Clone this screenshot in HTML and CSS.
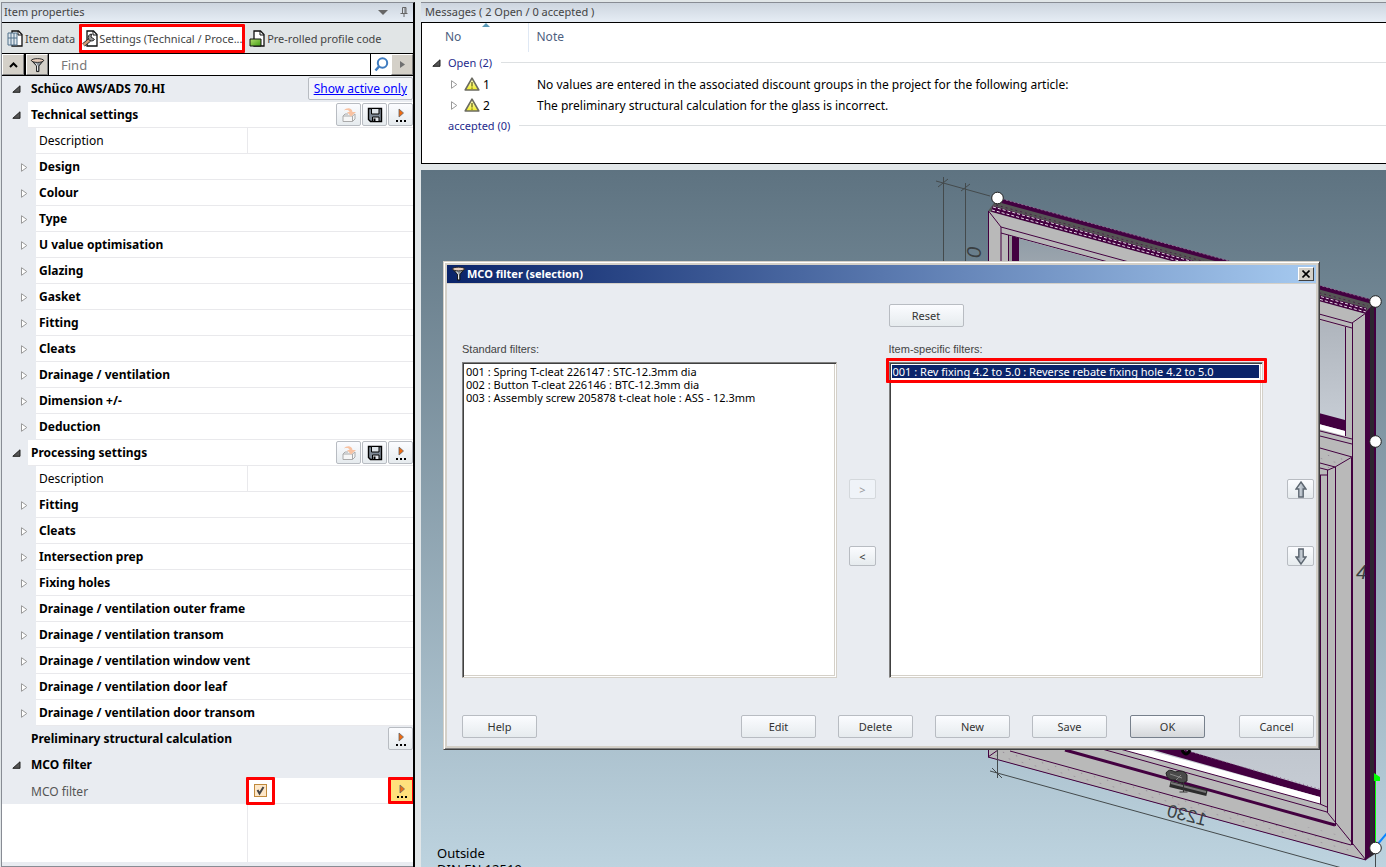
FILE: index.html
```
<!DOCTYPE html>
<html lang="en">
<head>
<meta charset="utf-8">
<title>Item properties</title>
<link rel="stylesheet" href="styles.css">
</head>
<body>
<svg class="defs" aria-hidden="true">
  <defs>
    <linearGradient id="steel" x1="0" x2="1" y1="0" y2="0"><stop offset="0" stop-color="#eef2f6"/><stop offset="1" stop-color="#8d99a6"/></linearGradient>
    <linearGradient id="warn" x1="0" x2="0" y1="0" y2="1"><stop offset="0" stop-color="#ffffe0"/><stop offset="1" stop-color="#f2ee20"/></linearGradient>
    <linearGradient id="leafgreen" x1="0" x2="1" y1="0" y2="1"><stop offset="0" stop-color="#b4e070"/><stop offset="1" stop-color="#3f9c10"/></linearGradient>
    <symbol id="i-expanded" viewBox="0 0 9 8"><path d="M8 .8V7.300H.8z" fill="#555" stroke="#222"/></symbol>
    <symbol id="i-collapsed" viewBox="0 0 7 9"><path d="M.5.7v7.600L5.800 4.500z" fill="#fff" stroke="#999"/></symbol>
    <symbol id="i-play" viewBox="0 0 14 16"><path d="M5 2v8l4.500-4z" fill="#f06a10" stroke="#666" stroke-width=".8"/><path d="M2 13h2v2H2zM6 13h2v2H6zM10 13h2v2h-2z" fill="#000"/></symbol>
    <symbol id="i-save" viewBox="0 0 16 16"><path d="M1.500 1.500h13v13h-11l-2-2z" fill="#7f8a96" stroke="#000" stroke-width="1.400"/><path d="M4.500 1.500h7.500V7H4.500z" fill="#dfe5ea" stroke="#000"/><path d="M5.500 10h6.500v4.500H5.500z" fill="#dfe3e8" stroke="#000"/><path d="M6.500 11.500h2v3h-2z" fill="#000"/></symbol>
    <symbol id="i-open" viewBox="0 0 16 16"><path d="M2 9h9.500l2.500-2V12l-2.500 2.500H2z" fill="#f6f6f6" stroke="#aaa"/><path d="M2 9l2-2h3M11.500 9v5.500" fill="none" stroke="#aaa"/><path d="M3 3.500C5 .5 11 0 11.500 5H15l-5 4.500L6 5h2.500C8.200 3 5.500 2.500 3 3.500z" fill="#f8c2a2"/></symbol>
    <symbol id="i-warn" viewBox="0 0 16 15"><path d="M8 1.200L14.800 13H1.200z" fill="url(#warn)" stroke="#6b6b60" stroke-width="1.600" stroke-linejoin="round"/><path d="M8 5v4.500M8 10.500v1.300" stroke="#6a6a20" stroke-width="1.300"/></symbol>
    <symbol id="i-funnel" viewBox="0 0 16 16"><path d="M1.500 3h13L9.500 9v6H7V9z" fill="#8a929a" stroke="#111"/><ellipse cx="8" cy="3.200" rx="6.500" ry="2" fill="#e8cdbb" stroke="#222"/><path d="M6 6l2 3v5" stroke="#eee" fill="none"/></symbol>
    <symbol id="i-arrow" viewBox="0 0 12 17"><path d="M6 1l5 7H8.200v8H3.800V8H1z" fill="url(#steel)" stroke="#5c6670" stroke-width="1.400"/></symbol>
    <symbol id="i-page" viewBox="0 0 16 17"><path d="M5 1h6.500L15 4.500V16H5z" fill="#fff" stroke="#111" stroke-width="1.300"/><path d="M11 1v4h4" fill="none" stroke="#111"/></symbol>
  </defs>
</svg>
<div class="app">
  <aside class="side">
    <header class="caption"><span class="grow">Item properties</span>
      <svg width="10" height="6" viewBox="0 0 10 6"><path d="M0 1h10L5 6z" fill="#666"/></svg>
      <svg width="8" height="10" viewBox="0 0 8 10"><path d="M2.500 6V.5h3.500V6M5 1v5M.5 6.500h7M4 7v3" fill="none" stroke="#666"/></svg>
    </header>
    <nav class="tabs">
      <a class="tab" href="#data"><svg width="16" height="17"><use href="#i-page"/><path d="M1 3h9v12H1zM4 3v12M7 3v12M1 8h9" fill="#dfe8ee" stroke="#51718a"/></svg>Item data</a>
      <a class="tab current" href="#settings"><svg width="16" height="17"><use href="#i-page"/><path d="M1.500 15l6-5" stroke="#222" stroke-width="4"/><path d="M1.500 15l6-5" stroke="#d09a78" stroke-width="2.500"/><path d="M12.500 9.500a3.500 3.500 0 1 1-3-5.500L9 7l1.500 1z" fill="#999" stroke="#222"/></svg><span class="clip">Settings (Technical / Proce...</span></a>
      <a class="tab" href="#code"><svg width="16" height="17"><use href="#i-page"/><path d="M1 9h11v7H1z" fill="url(#leafgreen)" stroke="#111"/></svg>Pre-rolled profile code</a>
    </nav>
    <form class="find">
      <button type="button" class="raised" aria-label="Collapse"><svg width="9" height="6" viewBox="0 0 9 6"><path d="M1 5l3.500-3.500L8 5" fill="none" stroke="#000" stroke-width="2"/></svg></button>
      <button type="button" class="raised" aria-label="Filter"><svg width="15" height="16"><use href="#i-funnel"/></svg></button>
      <input class="field" type="text" placeholder="Find" aria-label="Find">
      <span class="lens"><svg width="15" height="15" viewBox="0 0 15 15"><circle cx="8.500" cy="6" r="4.700" fill="#fff" stroke="#3f7cc0" stroke-width="2"/><path d="M5 9.500L1.500 13.500" stroke="#3f7cc0" stroke-width="2.500"/></svg></span>
      <button type="button" class="raised" aria-label="Next"><svg width="5" height="7" viewBox="0 0 5 7"><path d="M0 0v7l5-3.500z" fill="#707070"/></svg></button>
    </form>
    <div class="tree">
      <div class="row top"><span class="twist"><svg width="9" height="8"><use href="#i-expanded"/></svg></span><b class="grow">Schüco AWS/ADS 70.HI</b><a class="active-only" href="#active">Show active only</a></div>
      <div class="row group"><span class="twist"><svg width="9" height="8"><use href="#i-expanded"/></svg></span><span class="cell"><b class="grow">Technical settings</b>
        <button class="tool" aria-label="Load"><svg width="16" height="16"><use href="#i-open"/></svg></button><button class="tool" aria-label="Save"><svg width="16" height="16"><use href="#i-save"/></svg></button><button class="tool" aria-label="More"><svg width="14" height="16"><use href="#i-play"/></svg></button></span></div>
      <div class="row leaf"><span class="twist"></span><span class="cell"><span class="name">Description</span><span class="value"></span></span></div>
      <div class="row leaf"><span class="twist"><svg width="7" height="9"><use href="#i-collapsed"/></svg></span><b class="cell">Design</b></div>
      <div class="row leaf"><span class="twist"><svg width="7" height="9"><use href="#i-collapsed"/></svg></span><b class="cell">Colour</b></div>
      <div class="row leaf"><span class="twist"><svg width="7" height="9"><use href="#i-collapsed"/></svg></span><b class="cell">Type</b></div>
      <div class="row leaf"><span class="twist"><svg width="7" height="9"><use href="#i-collapsed"/></svg></span><b class="cell">U value optimisation</b></div>
      <div class="row leaf"><span class="twist"><svg width="7" height="9"><use href="#i-collapsed"/></svg></span><b class="cell">Glazing</b></div>
      <div class="row leaf"><span class="twist"><svg width="7" height="9"><use href="#i-collapsed"/></svg></span><b class="cell">Gasket</b></div>
      <div class="row leaf"><span class="twist"><svg width="7" height="9"><use href="#i-collapsed"/></svg></span><b class="cell">Fitting</b></div>
      <div class="row leaf"><span class="twist"><svg width="7" height="9"><use href="#i-collapsed"/></svg></span><b class="cell">Cleats</b></div>
      <div class="row leaf"><span class="twist"><svg width="7" height="9"><use href="#i-collapsed"/></svg></span><b class="cell">Drainage / ventilation</b></div>
      <div class="row leaf"><span class="twist"><svg width="7" height="9"><use href="#i-collapsed"/></svg></span><b class="cell">Dimension +/-</b></div>
      <div class="row leaf"><span class="twist"><svg width="7" height="9"><use href="#i-collapsed"/></svg></span><b class="cell">Deduction</b></div>
      <div class="row group"><span class="twist"><svg width="9" height="8"><use href="#i-expanded"/></svg></span><span class="cell"><b class="grow">Processing settings</b>
        <button class="tool" aria-label="Load"><svg width="16" height="16"><use href="#i-open"/></svg></button><button class="tool" aria-label="Save"><svg width="16" height="16"><use href="#i-save"/></svg></button><button class="tool" aria-label="More"><svg width="14" height="16"><use href="#i-play"/></svg></button></span></div>
      <div class="row leaf"><span class="twist"></span><span class="cell"><span class="name">Description</span><span class="value"></span></span></div>
      <div class="row leaf"><span class="twist"><svg width="7" height="9"><use href="#i-collapsed"/></svg></span><b class="cell">Fitting</b></div>
      <div class="row leaf"><span class="twist"><svg width="7" height="9"><use href="#i-collapsed"/></svg></span><b class="cell">Cleats</b></div>
      <div class="row leaf"><span class="twist"><svg width="7" height="9"><use href="#i-collapsed"/></svg></span><b class="cell">Intersection prep</b></div>
      <div class="row leaf"><span class="twist"><svg width="7" height="9"><use href="#i-collapsed"/></svg></span><b class="cell">Fixing holes</b></div>
      <div class="row leaf"><span class="twist"><svg width="7" height="9"><use href="#i-collapsed"/></svg></span><b class="cell">Drainage / ventilation outer frame</b></div>
      <div class="row leaf"><span class="twist"><svg width="7" height="9"><use href="#i-collapsed"/></svg></span><b class="cell">Drainage / ventilation transom</b></div>
      <div class="row leaf"><span class="twist"><svg width="7" height="9"><use href="#i-collapsed"/></svg></span><b class="cell">Drainage / ventilation window vent</b></div>
      <div class="row leaf"><span class="twist"><svg width="7" height="9"><use href="#i-collapsed"/></svg></span><b class="cell">Drainage / ventilation door leaf</b></div>
      <div class="row leaf"><span class="twist"><svg width="7" height="9"><use href="#i-collapsed"/></svg></span><b class="cell">Drainage / ventilation door transom</b></div>
      <div class="row top"><span class="twist"></span><b class="grow">Preliminary structural calculation</b><button class="tool" aria-label="More"><svg width="14" height="16"><use href="#i-play"/></svg></button></div>
      <div class="row top"><span class="twist"><svg width="9" height="8"><use href="#i-expanded"/></svg></span><b class="grow">MCO filter</b></div>
      <div class="row mco"><label class="mco-name" for="mco">MCO filter</label><span class="mco-value"><span class="mark"><input class="check" type="checkbox" id="mco" checked></span><button class="tool hot" aria-label="Edit MCO filter"><svg width="14" height="16"><use href="#i-play"/></svg></button></span></div>
      <div class="blank"></div>
    </div>
    <div class="foot"></div>
  </aside>
  <main class="main">
    <section class="messages">
      <header class="caption">Messages ( 2 Open / 0 accepted )</header>
      <div class="msg-box">
        <table class="msg-table">
          <thead><tr><th class="no">No<svg class="sort" width="8" height="4" viewBox="0 0 8 4"><path d="M0 4h8L4 0z" fill="#5a9ab8"/></svg></th><th>Note</th></tr></thead>
          <tbody>
            <tr><td colspan="2"><span class="msg-group"><svg width="9" height="8"><use href="#i-expanded"/></svg>Open (2)</span></td></tr>
            <tr><td><span class="msg-no"><svg width="7" height="9"><use href="#i-collapsed"/></svg><svg width="16" height="15"><use href="#i-warn"/></svg>1</span></td><td class="note">No values are entered in the associated discount groups in the project for the following article:</td></tr>
            <tr><td><span class="msg-no"><svg width="7" height="9"><use href="#i-collapsed"/></svg><svg width="16" height="15"><use href="#i-warn"/></svg>2</span></td><td class="note">The preliminary structural calculation for the glass is incorrect.</td></tr>
            <tr><td colspan="2"><span class="msg-group closed">accepted (0)</span></td></tr>
          </tbody>
        </table>
      </div>
    </section>
    <section class="view">
      <svg class="scene" viewBox="421 170 965 697" preserveAspectRatio="xMinYMin slice">
        <defs>
          <linearGradient id="glass" x1="0" x2="0" y1="0" y2="1"><stop offset="0" stop-color="#8f9ca6"/><stop offset=".3" stop-color="#a8aeb6"/><stop offset="1" stop-color="#c6ccd4"/></linearGradient>
          <pattern id="dots" width="13" height="12" patternUnits="userSpaceOnUse" patternTransform="skewY(15)"><path d="M2 3h1v1H2zM8 8h1v1H8z" fill="#8a7d8c"/></pattern>
        </defs>
        <g fill="none" stroke="#444a4c">
          <path d="M936 181L990 196M943.500 177V300M965.500 183V300M938 187l10-8M961 191l9-7"/>
        </g>
        <text class="dim" transform="translate(981 258) rotate(-90)" x="0" y="0">0</text>
        <!-- frame depth -->
        <path d="M997 199L1375 301V854L1366 860L988 757V211z" fill="#555"/>
        <path d="M1002 201L1373 302" stroke="#430040" stroke-width="4"/>
        <path d="M1002 199L1373 300" stroke="#8f6d93" stroke-dasharray="2 2"/>
        <path d="M996 205L1368 306" stroke="#430040" stroke-width=".6" stroke-dasharray="2 3"/>
        <path d="M992 209L1366 311" stroke="#430040" stroke-width="6"/>
        <path d="M993 207L1366 309M992 210L1366 312" stroke="#e8dce8" stroke-width="1" stroke-dasharray="3 2"/>
        <path d="M1365.500 312L1376 302V852L1365.500 860z" fill="#430040"/>
        <path d="M1370 308L1374 304V854L1370 857z" fill="#2d2630"/>
        <!-- front face -->
        <path d="M988 211L1366 314V860L988 757z" fill="#b9b9b9"/>
        <path d="M990 747L1352 838V845L1366 860L988 757z" fill="url(#dots)"/>
        <path d="M1320 450L1350 457L1330 469L1320 466z" fill="url(#dots)"/>
        <g fill="none" stroke="#430040">
          <path d="M988.500 757V211L1001 227V745M1008.500 235V745M1001 227L1352 323M1001 233L1352 328M1352 323L1366 313M1365.500 314V860" />
          <path d="M1352.500 323V845M1345.500 327V436M1320 431L1352 439M1320 436L1352 444M1320 448L1352 457L1335 467L1320 463M1335 467L1328 470L1320 468"/>
        </g>
        <path d="M1010 236L1345 328V421L1010 336z" fill="url(#glass)"/>
        <path d="M1009 236l3 1v64h-3z" fill="#999"/><path d="M1012 236l7 2v64h-7z" fill="#430040"/>
        <path d="M1300 408L1345 420V431L1300 419z" fill="#430040"/>
        <path d="M1300 419L1345 431V436L1300 424z" fill="#fff"/>
        <path d="M1020 420L1320 500V797L1020 715z" fill="url(#glass)"/>
        <path d="M1150 749H1182L1320 790V797z" fill="#430040"/>
        <path d="M1120 749H1145L1320 797V804z" fill="#fff"/>
        <g fill="none" stroke="#430040">
          <path d="M1320.500 475V804M1327.500 470V812M1335.500 467V826M1351.500 458V845M1320 475h7"/>
          <path d="M1120 749L1320 804L1327 807M1102 749L1327 812M1010 751L1351 845M1327 812L1366 860M988 757L1366 860M988 757L998 750"/>
          <path d="M1065 750L1335 825" stroke-width="3"/>
          <path d="M1180 749L1320 789" stroke="#8f6d93" stroke-dasharray="1 3"/>
        </g>
        <path d="M1182 750q4 8 8 0" fill="none" stroke="#000" stroke-width="3"/>
        <path d="M1170 784L1207 793" stroke="#2c2c2c" stroke-width="6"/>
        <path d="M1171 783L1206 792" stroke="#777" stroke-width="2"/>
        <path d="M1166 773q3-5 9-1q9-3 12 3v6q-6 4-11-1q-9 1-10-7z" fill="#4a4a4a" stroke="#222"/>
        <path d="M1170 774l12 4M1176 780l5-5" stroke="#888"/><path d="M1183.500 782v10m-4 0h8" stroke="#333"/>
        <g fill="none" stroke="#444a4c">
          <path d="M990 771L1342 868M997.500 750V778M992 768l10 10M1375.500 854V868"/>
        </g>
        <text class="dim flat" transform="translate(1205 826) rotate(14) scale(-1 1)" x="0" y="0">1230</text>
        <text class="dim" x="1356" y="579">4</text>
        <path d="M1365.500 314V860" stroke="#430040"/>
        <path d="M1375.500 780V843" stroke="#0f0" stroke-width="1"/><path d="M1374 773l6 4v4h-6z" fill="#0f0"/>
        <path d="M1377 845L1387 833" stroke="#0a84ff" stroke-width="2"/>
        <g fill="#fff" stroke="#222"><circle cx="997.500" cy="198" r="5.800"/><circle cx="1375.500" cy="301.500" r="5.800"/><circle cx="1375.500" cy="441.500" r="5.800"/><circle cx="1375.500" cy="848" r="5.800"/></g>
      </svg>
      <div class="info"><div>Outside</div><div>DIN EN 12519</div></div>
      <div class="dialog" role="dialog" aria-labelledby="dlg-title">
        <div class="dlg-bar"><svg width="15" height="15"><use href="#i-funnel" /></svg><span class="grow" id="dlg-title">MCO filter (selection)</span>
          <button class="close" aria-label="Close"><svg width="8" height="8" viewBox="0 0 8 8"><path d="M.5.5l7 7M7.500.5l-7 7" stroke="#000" stroke-width="1.600"/></svg></button></div>
        <div class="dlg-body">
          <div class="lists">
            <button class="btn reset">Reset</button>
            <label class="lbl std" for="std">Standard filters:</label>
            <label class="lbl own" for="own">Item-specific filters:</label>
            <select class="box std-box" id="std" size="20">
              <option>001 : Spring T-cleat 226147 : STC-12.3mm dia</option>
              <option>002 : Button T-cleat 226146 : BTC-12.3mm dia</option>
              <option>003 : Assembly screw 205878 t-cleat hole : ASS - 12.3mm</option>
            </select>
            <div class="move mid"><button class="mini" disabled>&gt;</button><button class="mini">&lt;</button></div>
            <div class="own-box"><select class="box" id="own" size="20">
              <option selected>001 : Rev fixing 4.2 to 5.0 : Reverse rebate fixing hole 4.2 to 5.0</option>
            </select><span class="ring"></span></div>
            <div class="move end"><button class="mini" aria-label="Up"><svg width="12" height="17"><use href="#i-arrow"/></svg></button><button class="mini" aria-label="Down"><svg class="flip" width="12" height="17"><use href="#i-arrow"/></svg></button></div>
          </div>
          <div class="actions"><button class="btn help">Help</button><button class="btn">Edit</button><button class="btn">Delete</button><button class="btn">New</button><button class="btn">Save</button><button class="btn default">OK</button><button class="btn cancel">Cancel</button></div>
        </div>
      </div>
    </section>
  </main>
</div>
</body>
</html>
```
FILE: styles.css
```
* { box-sizing: border-box; }
body { margin: 0; background: #e1e6e8; font-family: "Noto Sans", "Open Sans", sans-serif; font-size: 12px; color: #000; }
button, input, select { font-family: inherit; font-size: inherit; }
svg { display: block; flex: none; }
.defs { position: absolute; width: 0; height: 0; }
.grow { flex: 1; min-width: 0; }
.app { display: grid; grid-template-columns: minmax(300px, 421fr) minmax(0, 965fr); height: 100vh; overflow: hidden; padding-top: 2px; }

.side { display: flex; flex-direction: column; margin: 0 6px 0 1px; border-left: 1px solid #888c94; border-top: 1px solid #888c94; border-right: 2px solid #000; min-height: 0; }
.caption { display: flex; align-items: center; gap: 12px; height: 19px; padding: 0 5px 2px 2px; font-size: 11px; color: #444; background: linear-gradient(#cdd5df, #e6edf5); white-space: nowrap; flex: none; }
.main .caption { padding-left: 4px; }
.tabs { display: flex; align-items: center; gap: 4px; height: 32px; padding: 1px 5px 0; border-top: 1px solid #000; border-bottom: 1px solid #000; background: #e1e5e6; flex: none; }
.tab { display: flex; align-items: center; gap: 2px; font-size: 11px; color: #444; text-decoration: none; white-space: nowrap; }
.tab.current { width: 166px; height: 29px; gap: 1px; border: 3px solid #f00; border-radius: 1px; background: #fff; flex: none; }
.clip { flex: 1; }
.find { display: flex; height: 22px; border-bottom: 1px solid #000; background: #000; gap: 2px; flex: none; margin: 0; }
.raised { display: flex; align-items: center; justify-content: center; width: 22px; padding: 0; background: #d4d0c8; border: 1px solid; border-color: #fff #808080 #808080 #fff; flex: none; }
.field { flex: 1; min-width: 0; border: 0; padding: 0 12px; font-size: 13px; background: #fff; margin-left: -1px; }
.field::placeholder { color: #777; opacity: 1; }
.lens { display: flex; align-items: center; justify-content: center; width: 20px; background: #fff; margin: 0 -2px 0 -1px; }

.tree { display: flex; flex-direction: column; flex: 1; min-height: 0; background: #fff; overflow: hidden; }
.row { display: flex; height: 26px; flex: none; align-items: center; background: #e9ecf1; white-space: nowrap; }
.row.top { padding-bottom: 1px; }
.twist { width: 29px; padding-left: 10px; flex: none; }
.leaf .twist { width: 34px; padding-left: 19px; }
.cell { flex: 1; align-self: stretch; display: flex; align-items: center; gap: 1px; background: #fff; border-bottom: 1px solid #e9e9ec; }
.leaf .cell { padding-left: 3px; }
.group .twist { width: 26px; }
.group .cell { padding-left: 3px; }
.name { width: 209px; align-self: stretch; display: flex; align-items: center; border-right: 1px solid #e9e9ec; }
.tool { display: flex; align-items: center; justify-content: center; width: 25px; height: 23px; padding: 0; border: 1px solid #b8bcc2; border-radius: 2px; background: linear-gradient(#fbfcff, #e6ebee); flex: none; }
.active-only { display: flex; align-items: center; height: 23px; padding: 0 5px; border: 1px solid #b8bcc2; border-radius: 2px; background: #f3f5f9; color: #00f; text-decoration: underline; }
.mco-name { width: 245px; padding-left: 29px; color: #555; flex: none; }
.mco-value { flex: 1; align-self: stretch; display: flex; align-items: center; justify-content: space-between; background: #fff; border-bottom: 1px solid #e9e9ec; }
.mark { display: flex; align-items: center; justify-content: center; width: 29px; height: 28px; margin-left: -1px; border: 3px solid #f00; border-radius: 1px; background: #fff; }
.check { appearance: none; width: 13px; height: 13px; margin: 0; border: 1px solid #c08a3c; background: #fde7c8 url("data:image/svg+xml,%3Csvg xmlns='http://www.w3.org/2000/svg' viewBox='0 0 11 11'%3E%3Cpath d='M2.500 5l2 3.500L8.500 2' fill='none' stroke='%23444' stroke-width='2'/%3E%3C/svg%3E") center / 11px 11px; }
.tool.hot { width: 27px; height: 27px; margin-right: -2px; border: 3px solid #f00; border-radius: 1px; background: #ffe07c; }
.row.mco { position: relative; z-index: 1; }
.blank { flex: 1; margin-left: 245px; border-left: 1px solid #e9e9ec; }
.foot { height: 5px; flex: none; background: #e9ecf1; border-bottom: 1px solid #888c94; }

.main { display: flex; flex-direction: column; min-width: 0; min-height: 0; border-top: 1px solid #888c94; }
.msg-box { height: 142px; border: 1px solid #000; border-right: 0; background: #fff; }
.msg-table { width: 100%; table-layout: fixed; border-collapse: collapse; white-space: nowrap; }
.msg-table th { height: 29px; padding: 0 0 2px 8px; text-align: left; font-weight: 400; color: #4d6080; }
.msg-table th.no { position: relative; width: 106px; padding-left: 23px; border-right: 1px solid #dfe8f4; }
.sort { position: absolute; left: 60px; top: 0; }
.msg-table td { height: 21px; padding: 0; }
.msg-table td.note { padding: 2px 0 0 9px; }
.msg-group { display: flex; align-items: center; gap: 7px; padding-left: 10px; font-size: 11px; color: #1e2a8c; }
.msg-group::after { content: ""; flex: 1; height: 1px; margin-left: 2px; background: #dde0e2; }
.msg-group.closed { padding-left: 26px; }
.msg-no { display: flex; align-items: center; gap: 3px; padding: 1px 0 0 29px; }
.msg-no svg:first-child { margin-right: 3px; }

.view { position: relative; flex: 1; min-height: 0; margin-top: 6px; overflow: hidden; background: linear-gradient(#5e7381, #bdd3df); }
.scene { position: absolute; inset: 0; width: 100%; height: 100%; }
.dim { font-family: "Liberation Sans", sans-serif; font-size: 20px; font-style: italic; fill: #3a3f42; }
.dim.flat { font-style: normal; font-size: 18px; }
.info { position: absolute; left: 16px; top: 675px; font-size: 13px; line-height: 16px; }

.dialog { position: absolute; left: 22px; right: 66px; top: 91px; border: 1px solid; border-color: #d4d0c8 #404040 #404040 #d4d0c8; background: #d4d0c8; padding: 3px; box-shadow: inset 1px 1px #fff, inset -1px -1px #808080; }
.dlg-bar { display: flex; align-items: center; height: 18px; gap: 1px; padding: 0 2px 1px 4px; background: linear-gradient(90deg, #0a246a, #a6caf0); color: #fff; font-size: 11px; font-weight: 700; }
.close { display: flex; align-items: center; justify-content: center; width: 16px; height: 14px; padding: 0; background: #d4d0c8; border: 1px solid; border-color: #fff #404040 #404040 #fff; }
.dlg-body { margin-top: 1px; padding: 20px 2px 8px 15px; background: #e9ecf1; }
.lists { display: grid; grid-template-columns: 1fr 52px 1fr 51px; grid-template-rows: 23px 35px 316px; }
.reset { grid-column: 3; grid-row: 1; }
.lbl { grid-row: 2; align-self: end; padding-bottom: 6px; font-family: "Liberation Sans", sans-serif; font-size: 11px; line-height: 13px; color: #444; }
.std { grid-column: 1; }
.own { grid-column: 3; }
.std-box { grid-column: 1; grid-row: 3; }
.own-box { position: relative; grid-column: 3; grid-row: 3; }
.box { display: block; width: 100%; height: 316px; margin: 0; padding: 2px 3px 3px 2px; overflow: hidden; border: 1px solid; border-color: #808080 #d4d0c8 #d4d0c8 #808080; border-radius: 0; outline: 0; background: #fff; box-shadow: inset 1px 1px #404040, inset -1px -1px #fff, inset -2px -2px #d4d0c8; font-size: 11px; color: #000; }
.box option { display: flex; align-items: center; height: 13px; min-height: 13px; padding: 0 1px; line-height: 13px; }
.box option:checked { background: #0a246a linear-gradient(#0a246a, #0a246a); color: #fff; }
.ring { position: absolute; left: -3px; right: -4px; top: -4px; height: 25px; border: 3px solid #f00; border-radius: 1px; pointer-events: none; }
.move { grid-row: 3; display: flex; flex-direction: column; gap: 47px; padding-top: 117px; }
.mid { align-items: center; }
.end { align-items: flex-end; }
.btn, .mini { display: flex; align-items: center; justify-content: center; padding: 0; border: 1px solid #b8bcc2; border-radius: 2px; background: linear-gradient(#fbfcff, #e6ebee); color: #333; font-size: 11px; }
.btn { width: 75px; height: 23px; flex: none; }
.mini { width: 27px; height: 20px; }
.mini:disabled { background: #eff3f8; border-color: #d4d8dc; color: #999; }
.flip { transform: rotate(180deg); }
.actions { display: flex; gap: 22px; margin-top: 37px; }
.help { margin-right: auto; }
.default { margin-left: 1px; border-color: #77808c; background: linear-gradient(#fbfcff, #d4d7da); }
.cancel { margin-left: 12px; }
```
